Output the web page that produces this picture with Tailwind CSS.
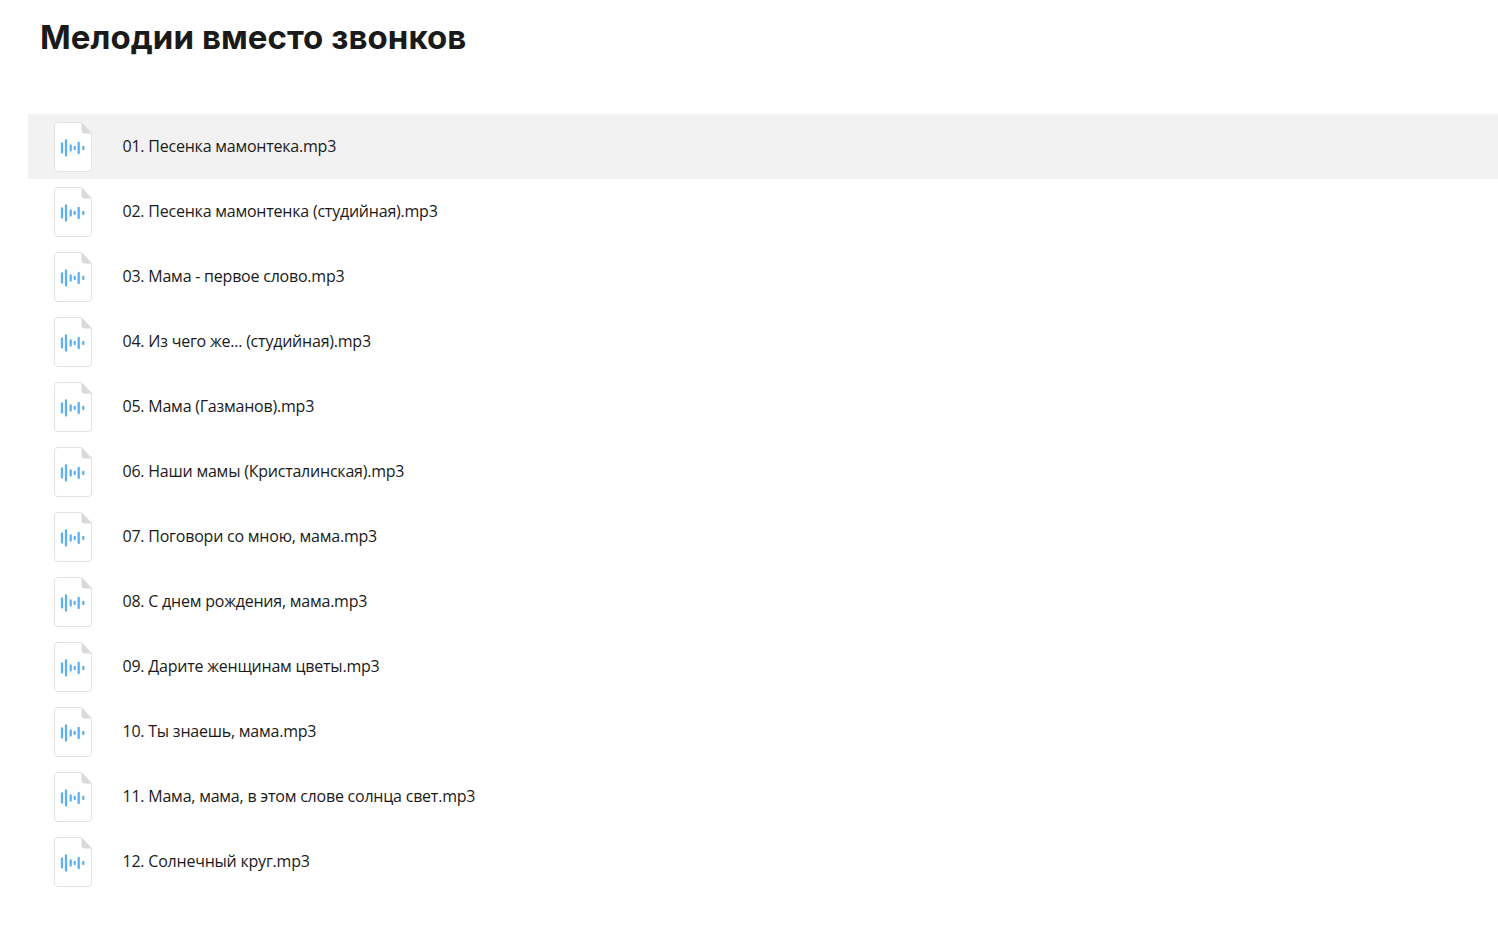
<!DOCTYPE html>
<html lang="ru"><head><meta charset="utf-8"><script src="https://cdn.jsdelivr.net/npm/@tailwindcss/browser@4"></script></head>
<body class="bg-white h-[928px] overflow-hidden font-['Open_Sans','Noto_Sans',sans-serif] text-[#1a1a1a]">
<svg width="0" height="0" class="absolute"><defs><symbol id="f" viewBox="0 0 38 50">
<path d="M4 .5H27.500L37.500 11V46A3.500 3.500 0 0 1 34 49.500H4A3.500 3.500 0 0 1 .5 46V4A3.500 3.500 0 0 1 4 .5Z" fill="#fff" stroke="#e2e2e2"/>
<path d="M27.500 .5L37.500 11.500H31A3.500 3.500 0 0 1 27.500 8Z" fill="#d9d9d9"/>
<g stroke="#5fb0f0" stroke-width="2.300" stroke-linecap="round"><path d="M8 21.500v9M12 18.500v15M16.700 23.500v5M20.700 25v2M24.700 21v10M29.300 25v2"/></g>
</symbol></defs></svg>
<main class="pl-[28px]">
<h1 class="pl-3 pt-[16px] h-[114px] text-[33px] leading-[42px] font-bold tracking-[0.05px] font-['Inter',sans-serif]">Мелодии вместо звонков</h1>
<ul class="text-[16px] leading-[22px] tracking-[-0.22px]">
<li class="h-[65px] flex items-center bg-[#f2f2f2]"><svg class="w-[38px] h-[50px] ml-[26px] mr-[30.5px] mt-[1px] shrink-0"><use href="#f"/></svg><span class="-mt-[1px]">01. Песенка мамонтека.mp3</span></li>
<li class="h-[65px] flex items-center"><svg class="w-[38px] h-[50px] ml-[26px] mr-[30.5px] mt-[1px] shrink-0"><use href="#f"/></svg><span class="-mt-[1px]">02. Песенка мамонтенка (студийная).mp3</span></li>
<li class="h-[65px] flex items-center"><svg class="w-[38px] h-[50px] ml-[26px] mr-[30.5px] mt-[1px] shrink-0"><use href="#f"/></svg><span class="-mt-[1px]">03. Мама - первое слово.mp3</span></li>
<li class="h-[65px] flex items-center"><svg class="w-[38px] h-[50px] ml-[26px] mr-[30.5px] mt-[1px] shrink-0"><use href="#f"/></svg><span class="-mt-[1px]">04. Из чего же... (студийная).mp3</span></li>
<li class="h-[65px] flex items-center"><svg class="w-[38px] h-[50px] ml-[26px] mr-[30.5px] mt-[1px] shrink-0"><use href="#f"/></svg><span class="-mt-[1px]">05. Мама (Газманов).mp3</span></li>
<li class="h-[65px] flex items-center"><svg class="w-[38px] h-[50px] ml-[26px] mr-[30.5px] mt-[1px] shrink-0"><use href="#f"/></svg><span class="-mt-[1px]">06. Наши мамы (Кристалинская).mp3</span></li>
<li class="h-[65px] flex items-center"><svg class="w-[38px] h-[50px] ml-[26px] mr-[30.5px] mt-[1px] shrink-0"><use href="#f"/></svg><span class="-mt-[1px]">07. Поговори со мною, мама.mp3</span></li>
<li class="h-[65px] flex items-center"><svg class="w-[38px] h-[50px] ml-[26px] mr-[30.5px] mt-[1px] shrink-0"><use href="#f"/></svg><span class="-mt-[1px]">08. С днем рождения, мама.mp3</span></li>
<li class="h-[65px] flex items-center"><svg class="w-[38px] h-[50px] ml-[26px] mr-[30.5px] mt-[1px] shrink-0"><use href="#f"/></svg><span class="-mt-[1px]">09. Дарите женщинам цветы.mp3</span></li>
<li class="h-[65px] flex items-center"><svg class="w-[38px] h-[50px] ml-[26px] mr-[30.5px] mt-[1px] shrink-0"><use href="#f"/></svg><span class="-mt-[1px]">10. Ты знаешь, мама.mp3</span></li>
<li class="h-[65px] flex items-center"><svg class="w-[38px] h-[50px] ml-[26px] mr-[30.5px] mt-[1px] shrink-0"><use href="#f"/></svg><span class="-mt-[1px]">11. Мама, мама, в этом слове солнца свет.mp3</span></li>
<li class="h-[65px] flex items-center"><svg class="w-[38px] h-[50px] ml-[26px] mr-[30.5px] mt-[1px] shrink-0"><use href="#f"/></svg><span class="-mt-[1px]">12. Солнечный круг.mp3</span></li>
</ul>
</main>
</body></html>
